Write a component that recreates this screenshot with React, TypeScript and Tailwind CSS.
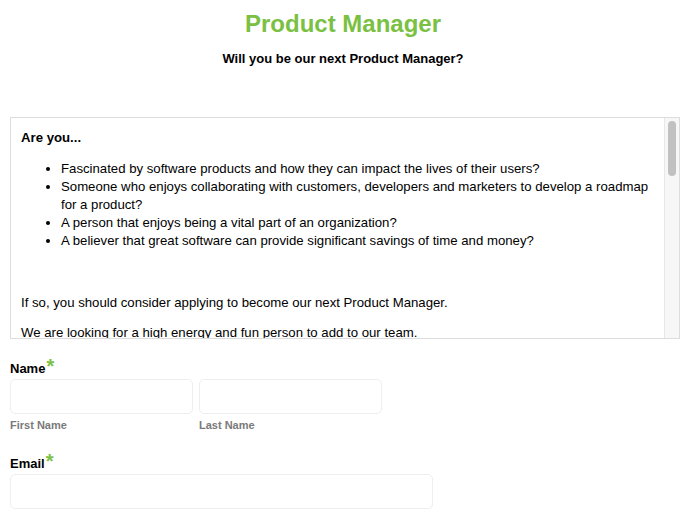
const bullets = [
  "Fascinated by software products and how they can impact the lives of their users?",
  "Someone who enjoys collaborating with customers, developers and marketers to develop a roadmap for a product?",
  "A person that enjoys being a vital part of an organization?",
  "A believer that great software can provide significant savings of time and money?",
];

const Star = () => (
  <span className="text-[#7ac143] text-[20px] leading-[16px] h-[16px] relative -top-[3px] ml-[1px]">*</span>
);

export default function App() {
  return (
    <div className="bg-white min-h-[523px] font-['Liberation_Sans',Arial,sans-serif] text-black">
      {/* header */}
      <div className="text-center pt-[9px]">
        <h1 className="text-[24px] font-bold text-[#7ac143] leading-[30px]">Product Manager</h1>
        <p className="text-[13px] font-bold mt-[12px] leading-[16px]">Will you be our next Product Manager?</p>
      </div>

      {/* description box */}
      <div className="ml-[10px] w-[670px] mt-[50px] h-[222px] border border-[#dddddd] flex overflow-hidden">
        <div className="flex-1 px-[10px] pt-[11px] text-[13.2px] leading-[18px]">
          <p className="font-bold">Are you...</p>
          <ul className="list-disc pl-[40px] mt-[13px]">
            {bullets.map((b) => (
              <li key={b}>{b}</li>
            ))}
          </ul>
          <p className="mt-[44px]">If so, you should consider applying to become our next Product Manager.</p>
          <p className="mt-[12px]">We are looking for a high energy and fun person to add to our team.</p>
        </div>
        <div className="w-[15px] bg-[#f7f7f7] border-l border-[#e8e8e8] pt-[3px] flex justify-center">
          <div className="w-[8px] h-[55px] rounded-full bg-[#c1c1c1]" />
        </div>
      </div>

      {/* form */}
      <div className="px-[10px] mt-[22px]">
        <div className="text-[13px] font-bold leading-[16px] h-[16px] flex items-start">
          Name<Star />
        </div>
        <div className="flex gap-[6px] mt-[2px]">
          <div className="w-[183px]">
            <div className="h-[35px] border border-[#eeeeee] rounded-[5px]" />
            <div className="text-[11px] font-bold text-[#7a7a7a] mt-[4px] leading-[14px]">First Name</div>
          </div>
          <div className="w-[183px]">
            <div className="h-[35px] border border-[#eeeeee] rounded-[5px]" />
            <div className="text-[11px] font-bold text-[#7a7a7a] mt-[4px] leading-[14px]">Last Name</div>
          </div>
        </div>
        <div className="text-[13px] font-bold leading-[16px] h-[16px] flex items-start mt-[24px]">
          Email<Star />
        </div>
        <div className="w-[423px] h-[35px] border border-[#eeeeee] rounded-[5px] mt-[2px]" />
      </div>
    </div>
  );
}
